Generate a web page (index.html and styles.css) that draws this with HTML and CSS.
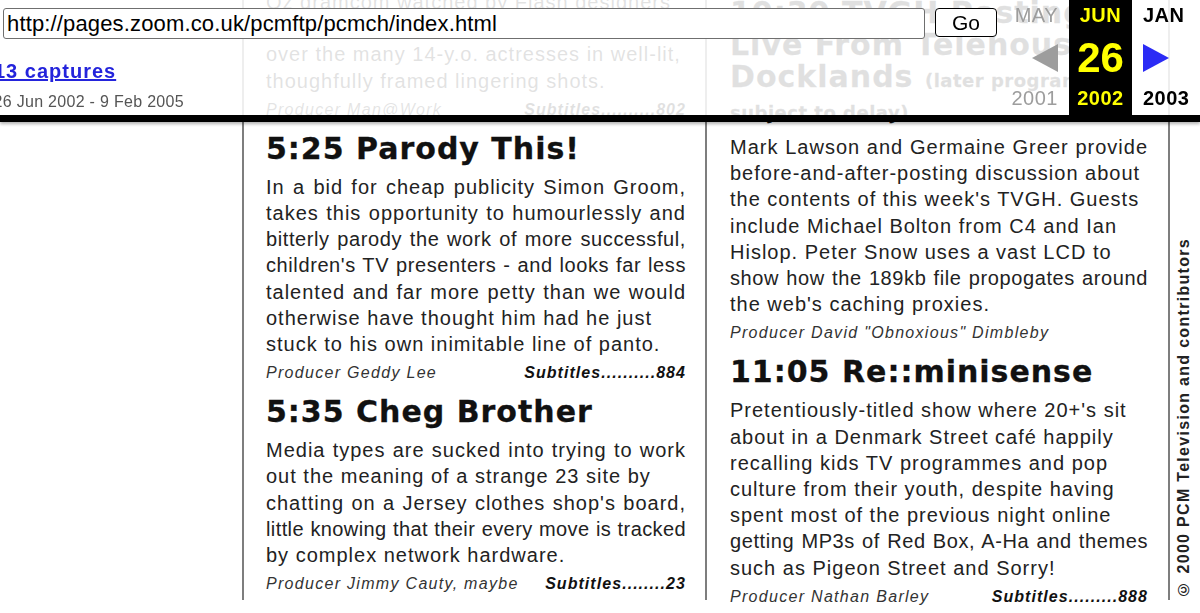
FILE: index.html
```html
<!DOCTYPE html>
<html>
<head>
<meta charset="utf-8">
<title>PCM Channel - index</title>
<link rel="stylesheet" href="styles.css">
</head>
<body>
<div class="guide">
  <div class="col col-left">
    <p class="desc">
      <span class="ln">Oz dramcom watched by Flash designers</span>
      <span class="ln">who, naturally, drool uncontrollably</span>
      <span class="ln">over the many 14-y.o. actresses in well-lit,</span>
      <span class="ln">thoughfully framed lingering shots.</span>
    </p>
    <div class="credit"><span class="producer">Producer Man@Work</span><span class="subs">Subtitles..........802</span></div>

    <h2 class="prog">5:25 Parody This!</h2>
    <p class="desc">
      <span class="ln full">In a bid for cheap publicity Simon Groom,</span>
      <span class="ln full">takes this opportunity to humourlessly and</span>
      <span class="ln full tight">bitterly parody the work of more successful,</span>
      <span class="ln full tight">children's TV presenters - and looks far less</span>
      <span class="ln full">talented and far more petty than we would</span>
      <span class="ln">otherwise have thought him had he just</span>
      <span class="ln">stuck to his own inimitable line of panto.</span>
    </p>
    <div class="credit"><span class="producer">Producer Geddy Lee</span><span class="subs">Subtitles..........884</span></div>

    <h2 class="prog">5:35 Cheg Brother</h2>
    <p class="desc">
      <span class="ln full">Media types are sucked into trying to work</span>
      <span class="ln">out the meaning of a strange 23 site by</span>
      <span class="ln full">chatting on a Jersey clothes shop's board,</span>
      <span class="ln full tighter">little knowing that their every move is tracked</span>
      <span class="ln">by complex network hardware.</span>
    </p>
    <div class="credit"><span class="producer">Producer Jimmy Cauty, maybe</span><span class="subs">Subtitles........23</span></div>
  </div>

  <div class="col col-right">
    <h2 class="prog">10:30 TVGH Posting:<br>Live From Telehouse<br>Docklands <span class="note">(later programmes<br>subject to delay)</span></h2>
    <p class="desc">
      <span class="ln full">Mark Lawson and Germaine Greer provide</span>
      <span class="ln">before-and-after-posting discussion about</span>
      <span class="ln">the contents of this week's TVGH. Guests</span>
      <span class="ln">include Michael Bolton from C4 and Ian</span>
      <span class="ln">Hislop. Peter Snow uses a vast LCD to</span>
      <span class="ln full tight">show how the 189kb file propogates around</span>
      <span class="ln">the web's caching proxies.</span>
    </p>
    <div class="credit"><span class="producer">Producer David "Obnoxious" Dimbleby</span></div>

    <h2 class="prog">11:05 Re::minisense</h2>
    <p class="desc">
      <span class="ln">Pretentiously-titled show where 20+'s sit</span>
      <span class="ln">about in a Denmark Street café happily</span>
      <span class="ln">recalling kids TV programmes and pop</span>
      <span class="ln">culture from their youth, despite having</span>
      <span class="ln">spent most of the previous night online</span>
      <span class="ln full tight">getting MP3s of Red Box, A-Ha and themes</span>
      <span class="ln">such as Pigeon Street and Sorry!</span>
    </p>
    <div class="credit"><span class="producer">Producer Nathan Barley</span><span class="subs">Subtitles.........888</span></div>
  </div>

  <div class="copyright">© 2000 PCM Television and contributors</div>
</div>

<div class="wayback">
  <div class="wb-main">
    <form class="wb-form">
      <input class="wb-url" type="text" value="http://pages.zoom.co.uk/pcmftp/pcmch/index.html">
      <button class="wb-go" type="button">Go</button>
    </form>
    <a class="wb-captures" href="#">13 captures</a>
    <div class="wb-range">26 Jun 2002 - 9 Feb 2005</div>
  </div>
  <div class="wb-cal">
    <div class="cal-col cal-prev">
      <div class="cal-month">MAY</div>
      <div class="cal-arrow-row">
        <svg width="26" height="28" viewBox="0 0 26 28"><path d="M26 0 L0 14 L26 28 Z" fill="#9d9d9d"/></svg>
      </div>
      <div class="cal-year">2001</div>
    </div>
    <div class="cal-col cal-cur">
      <div class="cal-month">JUN</div>
      <div class="cal-arrow-row cal-day">26</div>
      <div class="cal-year">2002</div>
    </div>
    <div class="cal-col cal-next">
      <div class="cal-month">JAN</div>
      <div class="cal-arrow-row">
        <svg width="26" height="28" viewBox="0 0 26 28"><path d="M0 0 L26 14 L0 28 Z" fill="#2b2bf5"/></svg>
      </div>
      <div class="cal-year">2003</div>
    </div>
  </div>
</div>
</body>
</html>
```

FILE: styles.css
```css
html, body {
  margin: 0;
  padding: 0;
}

body {
  width: 1200px;
  height: 613px;
  overflow: hidden;
  background: #fff;
  font-family: "Liberation Sans", Arial, sans-serif;
}

/* ---------- TV guide page ---------- */
.guide {
  display: flex;
  height: 613px;
  margin: -13px 0 0 242px;
}

.col {
  border-left: 2px solid #7e7e7e;
  color: #222;
}

.col-left {
  width: 420px;
  padding: 2px 19px 0 22px;
}

.col-right {
  width: 418px;
  padding: 0 20px 0 23px;
  border-right: 2px solid #7e7e7e;
}

.desc {
  margin: 0;
  font-size: 20px;
  line-height: 26.2px;
  letter-spacing: 1px;
  white-space: nowrap;
}

.ln {
  display: block;
}

.ln.full {
  text-align: justify;
  text-align-last: justify;
}

.ln.tight {
  letter-spacing: 0.6px;
}

.ln.tighter {
  letter-spacing: 0.4px;
}

.credit {
  display: flex;
  justify-content: space-between;
  margin-top: 3px;
  font-size: 16px;
  line-height: 26px;
  font-style: italic;
  letter-spacing: 1.3px;
  color: #333;
  white-space: nowrap;
}

.subs {
  font-weight: bold;
  letter-spacing: 1.05px;
  color: #111;
}

.prog {
  margin: 10px 0 9px;
  font-family: "DejaVu Sans", sans-serif;
  font-weight: bold;
  font-size: 30px;
  line-height: 32px;
  letter-spacing: 1px;
  color: #111;
  -webkit-text-stroke: 0.3px #111;
  white-space: nowrap;
}

.note {
  font-size: 18px;
  line-height: 20px;
  letter-spacing: 0.5px;
}

.copyright {
  align-self: flex-end;
  margin: 0 0 2px 4px;
  writing-mode: vertical-rl;
  transform: rotate(180deg);
  font-weight: bold;
  font-size: 16px;
  line-height: 20px;
  letter-spacing: 1.3px;
  color: #222;
  white-space: nowrap;
}

/* ---------- Wayback toolbar overlay ---------- */
.wayback {
  position: fixed;
  top: 0;
  left: 0;
  width: 1200px;
  height: 115px;
  display: flex;
  background: rgba(255, 255, 255, 0.87);
  border-bottom: 7px solid #000;
  box-shadow: 0 2px 3px rgba(0, 0, 0, 0.3);
  font-family: "Liberation Sans", Arial, sans-serif;
}

.wb-main {
  width: 994px;
  margin-left: 3px;
  padding-top: 8px;
}

.wb-form {
  display: flex;
  align-items: flex-start;
  gap: 10px;
  margin: 0;
}

.wb-url {
  box-sizing: border-box;
  width: 922px;
  height: 31px;
  margin: 0;
  padding: 0 3px;
  border: 1px solid #6f6f6f;
  border-radius: 3px;
  background: #fff;
  color: #000;
  font: 22px "Liberation Sans", Arial, sans-serif;
  letter-spacing: 0.15px;
  outline: none;
}

.wb-go {
  box-sizing: border-box;
  width: 62px;
  height: 29px;
  margin: 0;
  padding: 0;
  border: 1px solid #000;
  border-radius: 4px;
  background: #fff;
  color: #000;
  font: 21px "Liberation Sans", Arial, sans-serif;
}

.wb-captures {
  display: block;
  margin: 19px 0 0 -9px;
  font-size: 20px;
  font-weight: bold;
  line-height: 26px;
  letter-spacing: 1px;
  color: #2424dc;
  text-decoration: underline;
  white-space: nowrap;
}

.wb-range {
  margin: 7px 0 0 -9.5px;
  font-size: 16px;
  line-height: 22px;
  letter-spacing: 0.3px;
  color: #555;
  white-space: nowrap;
}

.wb-cal {
  display: flex;
  gap: 11px;
  margin-left: 11px;
}

.cal-col {
  display: flex;
  flex-direction: column;
}

.cal-prev {
  width: 50px;
  align-items: flex-end;
  color: #9d9d9d;
}

.cal-cur {
  width: 63px;
  height: 115px;
  align-items: center;
  background: #000;
  color: #ffff00;
  font-weight: bold;
}

.cal-next {
  align-items: flex-start;
  color: #000;
  font-weight: bold;
}

.cal-month {
  height: 32px;
  line-height: 30px;
  font-size: 20px;
  letter-spacing: 0.5px;
}

.cal-arrow-row {
  height: 51px;
  display: flex;
  align-items: center;
}

.cal-day {
  font-size: 42px;
  line-height: 51px;
}

.cal-year {
  height: 30px;
  line-height: 30px;
  font-size: 20px;
  letter-spacing: 0.5px;
}
```
